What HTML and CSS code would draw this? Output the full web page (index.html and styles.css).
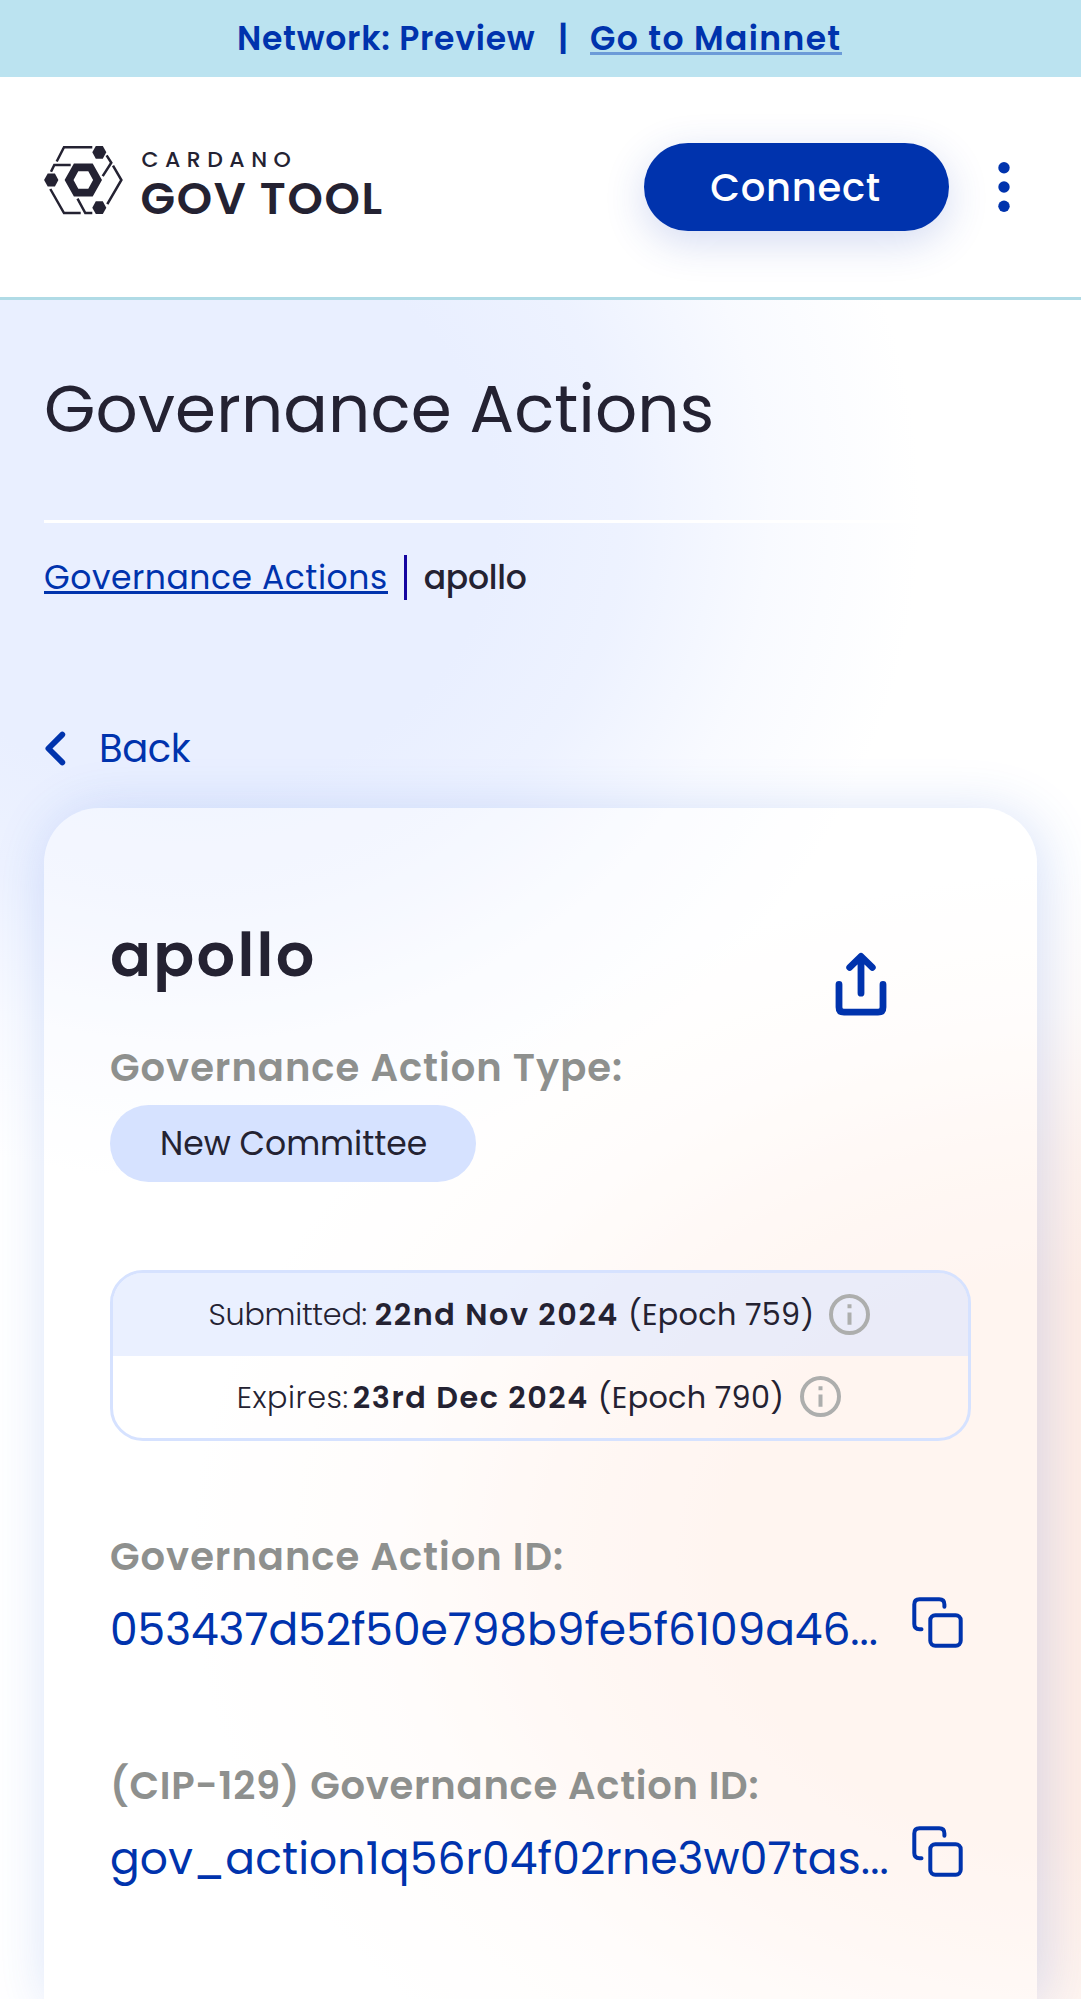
FILE: index.html
```html
<!DOCTYPE html>
<html lang="en">
<head>
<meta charset="utf-8">
<title>Governance Actions - GovTool</title>
<link rel="stylesheet" href="styles.css">
</head>
<body>
<div class="page">
  <div class="banner">
    <span class="banner-network">Network: Preview</span>
    <span class="banner-divider">|</span>
    <a class="banner-link" href="#">Go to Mainnet</a>
  </div>

  <header class="header">
    <svg class="logo" viewBox="0 0 340 72" role="img" aria-label="Cardano GovTool">
      <g fill="none" stroke="#242232" stroke-width="2.5">
        <path d="M12.7 16.5 20 2.3H48.3"/>
        <path d="M7 26.7 10.3 20H26.7"/>
        <path d="M62.6 10.4 67.3 17.7 58.7 31.2"/>
        <path d="M69 20.7 77.4 35 63.3 59.2"/>
        <path d="M6.3 44 20 68H36.7"/>
        <path d="M33.5 53.7 41.3 68H48.3"/>
      </g>
      <g fill="#242232">
        <path d="M48.3 7.3 51.8.9H58.8L62.3 7.3 58.8 13.8H51.8Z"/>
        <path d="M.1 35 3.7 28.6H10.9L14.4 35 10.9 41.4H3.7Z"/>
        <path d="M48.3 62.7 51.8 56.3H58.8L62.3 62.7 58.8 69.1H51.8Z"/>
        <path fill-rule="evenodd" d="M20.6 35 29.9 18.4H48.7L58 35 48.7 51.6H29.9ZM29.5 35 34.3 43.8H44.3L49.1 35 44.3 26.3H34.3Z"/>
        <text class="logo-top" x="97.5" y="22.2">CARDANO</text>
        <text class="logo-name" x="96.5" y="68.7">GOV TOOL</text>
      </g>
    </svg>
    <div class="header-actions">
      <button class="connect">Connect</button>
      <svg class="menu" viewBox="0 0 12 52"><g fill="#0033ad"><circle cx="6" cy="6.7" r="5.7"/><circle cx="6" cy="26" r="5.7"/><circle cx="6" cy="45.3" r="5.7"/></g></svg>
    </div>
  </header>

  <main class="main">
    <h1 class="title">Governance Actions</h1>
    <nav class="breadcrumbs">
      <a class="crumb-link" href="#">Governance Actions</a>
      <span class="crumb-divider"></span>
      <span class="crumb-current">apollo</span>
    </nav>
    <a class="back" href="#">
      <svg class="back-icon" viewBox="0 0 21 35"><path d="M17.3 3.6 3.4 17.5 17.3 31.4" fill="none" stroke="#0033ad" stroke-width="5.8" stroke-linecap="round" stroke-linejoin="round"/></svg>
      <span>Back</span>
    </a>

    <section class="card">
      <div class="card-head">
        <h2 class="card-title">apollo</h2>
        <svg class="share" viewBox="0 0 52 64" fill="none" stroke="#0033ad" stroke-width="6.8" stroke-linecap="round" stroke-linejoin="round"><path d="M4 32.4V55.2Q4 60.2 9 60.2H43Q48 60.2 48 55.2V32.4M26 41.2V4.6M14.7 15.4 26 4.4 37.3 15.4"/></svg>
      </div>
      <p class="label">Governance Action Type:</p>
      <span class="pill">New Committee</span>

      <div class="dates">
        <div class="date-row date-row-submitted">
          <span class="date-label submitted">Submitted:</span>
          <b class="date-value">22nd Nov 2024</b>
          <span class="date-epoch">(Epoch 759)</span>
          <svg class="info" viewBox="0 0 41 41"><circle cx="20.5" cy="20.5" r="18.5" fill="none" stroke="#adaead" stroke-width="4"/><path d="M18.5 10.3h4v4h-4zM18.5 18.4h4v12.3h-4z" fill="#adaead"/></svg>
        </div>
        <div class="date-row date-row-expires">
          <span class="date-label expires">Expires:</span>
          <b class="date-value">23rd Dec 2024</b>
          <span class="date-epoch">(Epoch 790)</span>
          <svg class="info" viewBox="0 0 41 41"><circle cx="20.5" cy="20.5" r="18.5" fill="none" stroke="#adaead" stroke-width="4"/><path d="M18.5 10.3h4v4h-4zM18.5 18.4h4v12.3h-4z" fill="#adaead"/></svg>
        </div>
      </div>

      <div class="field">
        <p class="label">Governance Action ID:</p>
        <div class="value-row">
          <span class="value">053437d52f50e798b9fe5f6109a46...</span>
          <svg class="copy" viewBox="0 0 51 51" fill="none" stroke="#0033ad" stroke-width="4" stroke-linecap="round" stroke-linejoin="round"><rect x="18.3" y="18.3" width="30.4" height="30.4" rx="5"/><path d="M9.5 32.2H7.5Q2.3 32.2 2.3 27V7.5Q2.3 2.3 7.5 2.3H27.2Q32.4 2.3 32.4 7.5V9.8"/></svg>
        </div>
      </div>
      <div class="field">
        <p class="label label-cip">(CIP-129) Governance Action ID:</p>
        <div class="value-row">
          <span class="value value-cip">gov_action1q56r04f02rne3w07tas...</span>
          <svg class="copy" viewBox="0 0 51 51" fill="none" stroke="#0033ad" stroke-width="4" stroke-linecap="round" stroke-linejoin="round"><rect x="18.3" y="18.3" width="30.4" height="30.4" rx="5"/><path d="M9.5 32.2H7.5Q2.3 32.2 2.3 27V7.5Q2.3 2.3 7.5 2.3H27.2Q32.4 2.3 32.4 7.5V9.8"/></svg>
        </div>
      </div>
    </section>
  </main>
</div>
</body>
</html>
```
FILE: styles.css
```css
* { box-sizing: border-box; }

body {
  margin: 0;
  background: #fff;
  color: #242232;
  font-family: Poppins, Inter, "Noto Sans", sans-serif;
}

h1, h2, p { margin: 0; }

svg { display: block; flex: none; }

.page {
  display: flex;
  flex-direction: column;
  height: 1999px;
  overflow: hidden;
}

/* Network banner */
.banner {
  display: flex;
  align-items: center;
  height: 77px;
  padding-left: 237px;
  background: #bbe3f0;
  color: #0033ad;
  font-size: 33px;
  font-weight: 600;
  line-height: 40px;
}
.banner-network { width: 299px; letter-spacing: .75px; white-space: nowrap; }
.banner-divider { width: 54px; text-align: center; }
.banner-link {
  width: 252px;
  padding-top: 3px;
  color: inherit;
  letter-spacing: 1.35px;
  text-decoration: none;
  white-space: nowrap;
  line-height: 27px;
  border-bottom: 3px solid #6c9bd8;
}

/* Header */
.header {
  display: flex;
  align-items: center;
  justify-content: space-between;
  height: 223px;
  padding: 0 71px 0 44px;
  background: #fff;
  border-bottom: 3px solid #b0dbe6;
}
.logo { width: 340px; height: 72px; margin-top: -13px; overflow: visible; }
.logo-top { font-size: 22px; font-weight: 500; letter-spacing: 6.5px; }
.logo-name { font-size: 45px; font-weight: 600; letter-spacing: 1.68px; }
.header-actions { display: flex; align-items: center; gap: 49px; }
.connect {
  width: 305px;
  height: 88px;
  padding: 1px 2px 0 0;
  border: 0;
  border-radius: 44px;
  background: #0033ad;
  box-shadow: 0 11px 41px rgba(40, 75, 190, .2);
  color: #fff;
  font: inherit;
  font-size: 38.5px;
  font-weight: 500;
  letter-spacing: .75px;
}
.menu { width: 12px; height: 52px; }

/* Page body */
.main {
  display: flex;
  flex: 1;
  flex-direction: column;
  padding: 0 44px;
  background:
    radial-gradient(ellipse 730px 670px at 190px 210px, #e9efff 0%, #e9efff 42%, rgba(233, 239, 255, .8) 60%, rgba(233, 239, 255, .3) 80%, rgba(233, 239, 255, 0) 100%),
    radial-gradient(ellipse 930px 690px at 1120px 1260px, #ffeee6 0%, #ffeee6 40%, rgba(255, 238, 230, .7) 60%, rgba(255, 238, 230, .22) 80%, rgba(255, 238, 230, 0) 100%);
}
.title {
  height: 223px;
  padding-top: 69px;
  border-bottom: 3px solid #fff;
  font-size: 66px;
  font-weight: 400;
  line-height: 80px;
  letter-spacing: .15px;
}
.breadcrumbs {
  display: flex;
  align-items: center;
  height: 45px;
  margin-top: 32px;
  font-size: 33px;
  line-height: 39px;
}
.crumb-link {
  padding-top: 3px;
  border-bottom: 3px solid #0033ad;
  line-height: 27px;
  color: #0033ad;
  letter-spacing: .55px;
  text-decoration: none;
}
.crumb-divider { width: 3px; height: 45px; margin: 0 17px 0 16px; background: #1505a0; }
.crumb-current { font-weight: 500; letter-spacing: -.25px; }
.back {
  display: flex;
  align-items: center;
  gap: 33px;
  height: 45px;
  margin-top: 126px;
  color: #0033ad;
  font-size: 38.5px;
  letter-spacing: -.4px;
  text-decoration: none;
}
.back-icon { width: 21px; height: 35px; margin-left: 1px; }

/* Detail card */
.card {
  flex: 1;
  margin-top: 37px;
  padding: 110px 66px 0;
  border-radius: 55px 55px 0 0;
  background: rgba(255, 255, 255, .4);
  box-shadow: 5px 5px 55px rgba(47, 98, 220, .2);
}
.card-head {
  display: flex;
  justify-content: space-between;
  height: 126px;
  padding-right: 84px;
}
.card-title {
  font-size: 60.5px;
  font-weight: 600;
  line-height: 74px;
  letter-spacing: 2.28px;
}
.share { width: 52px; height: 64px; margin-top: 34px; }
.label {
  height: 46px;
  color: #8e908e;
  font-size: 38.5px;
  font-weight: 600;
  line-height: 48px;
  letter-spacing: .98px;
}
.label-cip { letter-spacing: .74px; }
.pill {
  display: flex;
  align-items: center;
  width: 366px;
  height: 77px;
  margin-top: 15px;
  padding-left: 50px;
  border-radius: 39px;
  background: #d6e2ff;
  font-size: 33px;
}
.dates {
  margin-top: 88px;
  border: 3px solid #d6e2ff;
  border-radius: 33px;
  overflow: hidden;
}
.date-row {
  display: flex;
  align-items: center;
  justify-content: center;
  height: 82.5px;
  padding-right: 2px;
  font-size: 30.25px;
}
.date-row-submitted { background: rgba(214, 226, 255, .5); }
.date-row-expires { padding-right: 3px; }
.date-row span, .date-row b { padding-top: 2px; }
.date-label { margin-right: 8px; font-weight: 300; }
.submitted { letter-spacing: -.28px; }
.expires { margin-right: 4px; letter-spacing: .6px; }
.date-value { margin-right: 9px; font-weight: 600; letter-spacing: 1.58px; }
.date-epoch { margin-right: 15px; letter-spacing: .3px; }
.date-row-expires .date-epoch { margin-right: 16px; }
.info { width: 41px; height: 41px; }

.field { height: 229px; margin-top: 92px; }
.field + .field { margin-top: 0; }
.value-row {
  display: flex;
  align-items: center;
  justify-content: space-between;
  height: 60px;
  margin-top: 20px;
  padding-right: 8px;
  color: #0033ad;
}
.value { font-size: 44px; letter-spacing: -.06px; white-space: nowrap; }
.value-cip { letter-spacing: .12px; }
.copy { width: 51px; height: 51px; margin-top: -13px; }
```
